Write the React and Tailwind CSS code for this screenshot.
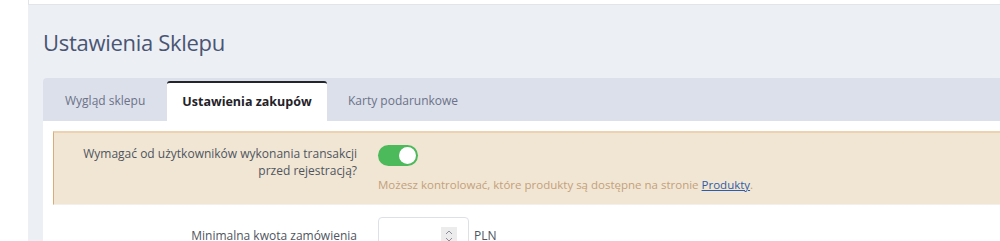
export default function App() {
  return (
    <div className="flex min-h-[241px] h-[241px] overflow-hidden bg-white" style={{ fontFamily: '"Open Sans", "Noto Sans", sans-serif' }}>
      <div className="w-[28px] shrink-0 bg-white" />
      <div className="flex-1 bg-[#eceff4] min-w-0">
        <div className="h-[5px] bg-white border-b border-l border-[#e1e4e8]" />
        <div className="pl-[15px]">
          <h1 className="pt-[22px] h-[73px] text-[22px] leading-[30px] text-[#4a5573] tracking-[-0.3px]">Ustawienia Sklepu</h1>
          <div className="flex h-[43px] bg-[#dce0ea] rounded-tl-[4px] items-end">
            <div className="h-[40px] w-[124px] flex items-center pl-[22px] text-[12px] text-[#6b7289]">Wygląd sklepu</div>
            <div className="h-[40px] w-[160px] flex items-center justify-center bg-white border-t-2 border-[#23252b] rounded-t-[3px] text-[12.5px] font-bold text-[#1f2229]">Ustawienia zakupów</div>
            <div className="h-[40px] flex items-center pl-[21px] text-[12px] text-[#6b7289]">Karty podarunkowe</div>
          </div>
          <div className="bg-white pt-[10px] pl-[10px] h-[200px]">
            <div className="bg-[#f1e6d4] border-t-2 border-t-[#ecd2b0] border-l border-l-[#d9aa7c] border-b border-b-[#f4efe8] flex pt-[12px] pb-[11px]">
              <div className="w-[303px] shrink-0 text-right text-[12px] leading-[17px] text-[#4e5560]">
                Wymagać od użytkowników wykonania transakcji<br />przed rejestracją?
              </div>
              <div className="pl-[21px]">
                <div className="w-[40px] h-[21px] rounded-full bg-[#4cb95a] flex items-center justify-end pr-[2px]">
                  <div className="w-[17px] h-[17px] rounded-full bg-white" />
                </div>
                <div className="mt-[10px] text-[11.5px] leading-[17px] text-[#c4a07a]">
                  Możesz kontrolować, które produkty są dostępne na stronie{' '}
                  <span className="text-[#2f5ca8] underline">Produkty</span>.
                </div>
              </div>
            </div>
            <div className="flex pt-[12px]">
              <div className="w-[304px] shrink-0 text-right text-[12px] leading-[17px] text-[#4e5560] pt-[10px]">Minimalna kwota zamówienia</div>
              <div className="pl-[21px] flex items-start">
                <div className="w-[91px] h-[36px] border border-[#dde1e6] rounded-[4px] bg-white relative">
                  <div className="absolute right-[11px] top-[9px] w-[16px] h-[18px] bg-[#ececec] flex flex-col items-center justify-center">
                    <svg width="8" height="5" viewBox="0 0 8 5"><path d="M1 4 L4 1 L7 4" fill="none" stroke="#8a8f96" strokeWidth="1" /></svg>
                    <svg width="8" height="5" viewBox="0 0 8 5" className="mt-[2px]"><path d="M1 1 L4 4 L7 1" fill="none" stroke="#8a8f96" strokeWidth="1" /></svg>
                  </div>
                </div>
                <div className="pl-[5px] pt-[10px] text-[12px] leading-[17px] text-[#4e5560]">PLN</div>
              </div>
            </div>
          </div>
        </div>
      </div>
    </div>
  );
}
